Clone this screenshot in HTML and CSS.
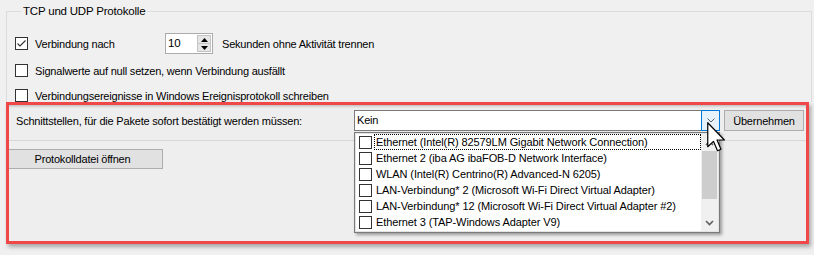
FILE: index.html
```html
<!DOCTYPE html>
<html lang="de">

<head>
    <meta charset="UTF-8">
    <title>TCP und UDP Protokolle</title>
    <link rel="stylesheet" href="styles.css">
</head>

<body>
    <fieldset class="group">
        <legend>TCP und UDP Protokolle</legend>

        <div class="row row-timeout">
            <span class="check">
                <svg width="11" height="11" viewBox="0 0 11 11"><polyline points="1.5,5.5 4,8 9.5,2.5" fill="none" stroke="#333" stroke-width="1.1"/></svg>
            </span>
            <span class="text label-fixed">Verbindung nach</span>
            <div class="spin">
                <span class="spin-value">10</span>
                <div class="spin-btns">
                    <span class="spin-half"><svg width="7" height="4" viewBox="0 0 7 4"><polygon points="0,4 3.5,0 7,4" fill="#000"/></svg></span>
                    <span class="spin-half"><svg width="7" height="4" viewBox="0 0 7 4"><polygon points="0,0 3.5,4 7,0" fill="#000"/></svg></span>
                </div>
            </div>
            <span class="after">Sekunden ohne Aktivität trennen</span>
        </div>

        <div class="row row-signal">
            <span class="check"></span>
            <span class="text">Signalwerte auf null setzen, wenn Verbindung ausfällt</span>
        </div>

        <div class="row row-events">
            <span class="check"></span>
            <span class="text">Verbindungsereignisse in Windows Ereignisprotokoll schreiben</span>
        </div>
    </fieldset>

    <div class="highlight">
        <div class="iface-row">
            <span class="iface-label">Schnittstellen, für die Pakete sofort bestätigt werden müssen:</span>
            <div class="combo">
                <span class="combo-text">Kein</span>
                <span class="combo-btn">
                    <svg width="8" height="5" viewBox="0 0 8 5"><polyline points="0.5,0.5 4,4 7.5,0.5" fill="none" stroke="#606060" stroke-width="1"/></svg>
                </span>
            </div>
            <button class="btn btn-apply">Übernehmen</button>
        </div>

        <div class="separator"></div>

        <button class="btn btn-log">Protokolldatei öffnen</button>

        <!-- open dropdown of the combo box -->
        <div class="droplist">
            <ul class="items">
                <li class="item"><span class="check"></span><span class="item-text focused">Ethernet (Intel(R) 82579LM Gigabit Network Connection)</span></li>
                <li class="item"><span class="check"></span><span class="item-text">Ethernet 2 (iba AG ibaFOB-D Network Interface)</span></li>
                <li class="item"><span class="check"></span><span class="item-text">WLAN (Intel(R) Centrino(R) Advanced-N 6205)</span></li>
                <li class="item"><span class="check"></span><span class="item-text">LAN-Verbindung* 2 (Microsoft Wi-Fi Direct Virtual Adapter)</span></li>
                <li class="item"><span class="check"></span><span class="item-text">LAN-Verbindung* 12 (Microsoft Wi-Fi Direct Virtual Adapter #2)</span></li>
                <li class="item"><span class="check"></span><span class="item-text">Ethernet 3 (TAP-Windows Adapter V9)</span></li>
            </ul>
            <div class="scrollbar">
                <span class="sb-arrow">
                    <svg width="9" height="6" viewBox="0 0 9 6"><polyline points="1,5 4.5,1.5 8,5" fill="none" stroke="#606060" stroke-width="1.6"/></svg>
                </span>
                <span class="sb-thumb"></span>
                <span class="sb-space"></span>
                <span class="sb-arrow">
                    <svg width="9" height="6" viewBox="0 0 9 6"><polyline points="1,1 4.5,4.5 8,1" fill="none" stroke="#606060" stroke-width="1.6"/></svg>
                </span>
            </div>
        </div>

        <svg class="cursor" width="18" height="30" viewBox="0 0 12 20">
            <path d="M0.5 0.5 L0.5 16.5 L4.3 12.9 L7 19.2 L9.3 18.2 L6.7 12 L11.6 12 Z" fill="#fff" stroke="#000" stroke-width="0.8" stroke-linejoin="round"/>
        </svg>
    </div>
</body>

</html>
```

FILE: styles.css
```css
* {
    box-sizing: border-box;
}

body {
    margin: 0;
    width: 814px;
    height: 255px;
    overflow: hidden;
    background: #f0f0f0;
    color: #000;
    font-family: "Liberation Sans", Arial, sans-serif;
    font-size: 11px;
    letter-spacing: -0.2px;
}

/* group box */

.group {
    margin: 3px 0 0 6px;
    width: 806px;
    border: 1px solid #dcdcdc;
    border-bottom: none;
    padding: 14px 8px 0 8px;
    min-width: 0;
}

legend {
    margin-left: 6px;
    padding: 0 2px;
    line-height: 16px;
    font-size: 11.5px;
}

.row {
    display: flex;
    align-items: center;
}

.row-timeout {
    height: 21px;
}

.row-signal {
    height: 13px;
    margin-top: 10px;
}

.row-events {
    height: 13px;
    margin-top: 12px;
}

.check {
    flex: none;
    width: 13px;
    height: 13px;
    border: 1px solid #333;
    background: #fff;
    display: flex;
    align-items: center;
    justify-content: center;
}

.text {
    margin-left: 7px;
}

.label-fixed {
    width: 130px;
}

.spin {
    display: flex;
    width: 48px;
    height: 21px;
    border: 1px solid #acacac;
    background: #fff;
}

.spin-value {
    flex: 1;
    padding-left: 2px;
    line-height: 19px;
    font-size: 11.5px;
}

.spin-btns {
    display: flex;
    flex-direction: column;
    width: 14px;
    margin: 1px 1px 1px 0;
}

.spin-half {
    flex: 1;
    display: flex;
    align-items: center;
    justify-content: center;
    background: #e6e6e6;
    border: 1px solid #c4c4c4;
}

.spin-half + .spin-half {
    border-top: none;
}

.after {
    margin-left: 9px;
}

/* marked area */

.highlight {
    position: relative;
    margin-left: 6px;
    width: 803px;
    height: 142px;
    border: 3px solid #f04848;
    background: #eeeeee;
    box-shadow: 2px 3px 4px rgba(0, 0, 0, 0.3), inset 0 4px 3px -3px rgba(0, 0, 0, 0.25);
}

.iface-row {
    display: flex;
    align-items: center;
    height: 21px;
    margin-top: 5px;
}

.iface-label {
    width: 345px;
    padding-left: 7px;
}

.combo {
    display: flex;
    width: 366px;
    height: 21px;
    border: 1px solid #7a7a7a;
    background: #fff;
}

.combo-text {
    flex: 1;
    padding-left: 2px;
    line-height: 19px;
}

.combo-btn {
    width: 19px;
    display: flex;
    align-items: center;
    justify-content: center;
    background: #e5f1fb;
    border: 1px solid #0078d7;
    margin: -1px -1px -1px 0;
}

.btn {
    font: inherit;
    letter-spacing: inherit;
    color: #000;
    background: #e1e1e1;
    border: 1px solid #adadad;
    padding: 0;
}

.btn-apply {
    margin-left: 4px;
    width: 80px;
    height: 21px;
}

.separator {
    height: 1px;
    margin-top: 9px;
    background: #d7d7d7;
}

.btn-log {
    display: block;
    margin-top: 8px;
    width: 154px;
    height: 20px;
    border-left: none;
    padding-right: 6px;
}

/* dropdown list */

.droplist {
    position: absolute;
    left: 345px;
    top: 27px;
    width: 366px;
    height: 101px;
    display: flex;
    border: 1px solid #7a7a7a;
    padding: 1px;
    background: #e3e3e3;
    box-shadow: 2px 2px 3px rgba(0, 0, 0, 0.35);
    font-size: 11px;
    letter-spacing: -0.1px;
}

.items {
    flex: 1;
    list-style: none;
    margin: 0;
    padding: 0 0 0 3px;
    background: #fff;
}

.item {
    display: flex;
    align-items: center;
    height: 16px;
}

.item-text {
    flex: 1;
    margin-left: 2px;
    padding-left: 1px;
    line-height: 14px;
    border: 1px dotted transparent;
    white-space: nowrap;
}

.item-text.focused {
    border-color: #000;
}

.scrollbar {
    width: 17px;
    display: flex;
    flex-direction: column;
    background: #f0f0f0;
}

.sb-arrow {
    height: 17px;
    display: flex;
    align-items: center;
    justify-content: center;
}

.sb-thumb {
    height: 48px;
    margin: 0 1px;
    background: #cdcdcd;
}

.sb-space {
    flex: 1;
}

.cursor {
    position: absolute;
    left: 698px;
    top: 17px;
}
```
